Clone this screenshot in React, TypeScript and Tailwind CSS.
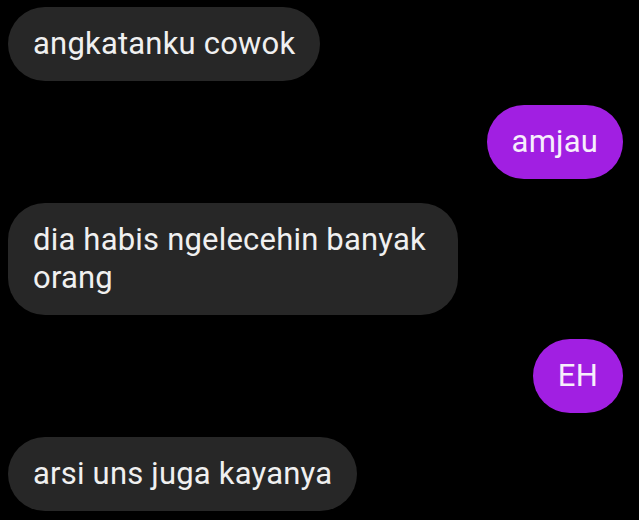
import React from 'react';

type Message = {
  text: string;
  mine?: boolean;
};

const messages: Message[] = [
  { text: 'angkatanku cowok' },
  { text: 'amjau', mine: true },
  { text: 'dia habis ngelecehin banyak orang' },
  { text: 'EH', mine: true },
  { text: 'arsi uns juga kayanya' },
];

const Bubble = ({ text, mine }: Message) => {
  return (
    <div className={mine ? 'flex justify-end' : 'flex justify-start'}>
      <div
        className={
          mine
            ? 'max-w-[450px] rounded-[37px] bg-[#a11fe2] px-[25px] py-[18px] text-[31px] leading-[38px] tracking-[0.2px] text-[#f7eefc]'
            : 'max-w-[450px] rounded-[37px] bg-[#272727] px-[25px] py-[18px] text-[31px] leading-[38px] tracking-[0.2px] text-[#f0f0f0]'
        }
      >
        {text}
      </div>
    </div>
  );
};

export default function App() {
  return (
    <div
      className="w-[639px] h-[520px] overflow-hidden bg-black pt-[7px] pl-2 pr-4 flex flex-col gap-6"
      style={{ fontFamily: 'Roboto, "Noto Sans", sans-serif' }}
    >
      {messages.map((m, i) => (
        <Bubble key={i} text={m.text} mine={m.mine} />
      ))}
    </div>
  );
}
